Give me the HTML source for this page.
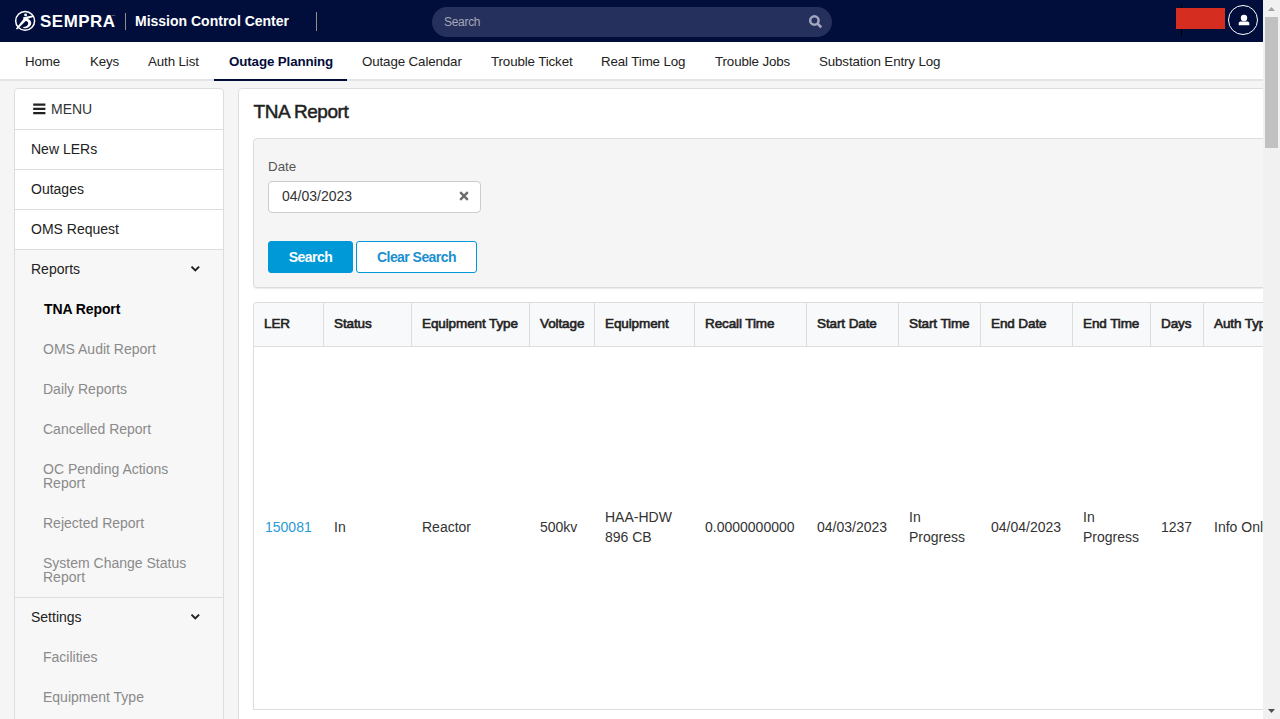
<!DOCTYPE html>
<html lang="en">
<head>
<meta charset="utf-8">
<title>TNA Report - Mission Control Center</title>
<style>
*{box-sizing:border-box;margin:0;padding:0}
html,body{width:1280px;height:719px;overflow:hidden}
body{font-family:"Liberation Sans",Arial,sans-serif;background:#f5f5f5;color:#222;position:relative}
.abs{position:absolute}
/* header */
#hdr{position:absolute;left:0;top:0;width:1263px;height:42px;background:#010e3c}
#brand{position:absolute;left:40px;top:11px;font-size:15px;font-weight:bold;color:#fff;letter-spacing:.45px;line-height:20px;transform:translateY(1px) scale(1.13,1.06);transform-origin:0 15px}
#tm{position:absolute;left:111.5px;top:13.5px;font-size:2.5px;color:#fff;line-height:3px;opacity:.7}
.vdiv{position:absolute;width:1px;background:#968f80}
#appname{position:absolute;left:135px;top:11px;font-size:14px;font-weight:bold;color:#fff;line-height:20px;white-space:nowrap}
#sbox{position:absolute;left:432px;top:7px;width:400px;height:30px;border-radius:15px;background:#26305c}
#sbox span{position:absolute;left:12px;top:7px;letter-spacing:-.3px;font-size:12px;line-height:16px;color:#a4a8ba}
#redact{position:absolute;left:1176px;top:8px;width:49px;height:21px;background:#d52d1f}
#blk{position:absolute;left:1181px;top:5px;width:1px;height:32px;background:#000}
#user{position:absolute;left:1228px;top:5px;width:30px;height:30px;border-radius:50%;border:1.5px solid #fff}
/* nav */
#nav{position:absolute;left:0;top:42px;width:1263px;height:39px;background:#fff;border-bottom:2px solid #e4e4e4}
#nav a{position:absolute;top:1px;height:38px;line-height:38px;font-size:13.33px;letter-spacing:-.12px;color:#222;white-space:nowrap;text-decoration:none}
#nav a.act{font-weight:bold;color:#020c3b}
#navline{position:absolute;left:214px;top:37px;width:133px;height:2px;background:#020c3b}
/* sidebar */
#side{position:absolute;left:14px;top:88px;width:210px;height:640px;background:#fff;border:1px solid #ddd;border-radius:4px;overflow:hidden}
#side .row{position:relative;height:40px;border-bottom:1px solid #ddd;font-size:14px;line-height:39px;padding-left:16px;color:#222}
#side .grp{background:#f7f7f7;border-bottom:1px solid #ddd}
#side .gh{position:relative;height:39px;line-height:39px;font-size:14px;padding-left:16px;color:#222}
#side .sub{padding:13px 30px 13px 28px;font-size:14px;line-height:14px;color:#8a8a8a}
#side .sub.cur{color:#000;font-weight:bold;padding-left:29px;letter-spacing:-.1px}
.chev{position:absolute;left:176px;top:15px}
/* main */
#main{position:absolute;left:238px;top:88px;width:1040px;height:640px;background:#fff;border:1px solid #ddd;border-radius:4px 0 0 0}
#title{position:absolute;left:14.5px;top:11px;font-size:19px;font-weight:normal;-webkit-text-stroke:.5px #222;line-height:24px;color:#222;letter-spacing:-.45px}
#panel{position:absolute;left:14px;top:49px;width:1030px;height:150px;background:#f5f5f5;border:1px solid #ddd;border-radius:4px;box-shadow:0 1px 1px rgba(0,0,0,.08)}
#lbl{position:absolute;left:14px;top:20px;font-size:13.33px;line-height:16px;color:#555}
#inp{position:absolute;left:14px;top:42px;width:213px;height:32px;background:#fff;border:1px solid #ccc;border-radius:4px}
#inp span{position:absolute;left:13px;top:6px;font-size:14px;line-height:16px;color:#333}
.btn{position:absolute;top:102px;height:32px;border-radius:3px;font-size:14px;letter-spacing:-.55px;font-weight:bold;line-height:30px;text-align:center;border:1px solid #0099d8}
#b1{left:14px;width:85px;background:#0099d8;color:#fff}
#b2{left:102px;width:121px;background:#fff;color:#1a8fcf}
/* table */
#tbl{position:absolute;left:14px;top:213px;border-collapse:separate;border-spacing:0;table-layout:fixed;width:1071px;border-top:1px solid #ddd;border-left:1px solid #ddd;border-radius:4px 0 0 0}
#tbl th{height:44px;background:#f8f9fa;border-right:1px solid #ddd;border-bottom:1px solid #ddd;font-size:13.5px;font-weight:normal;-webkit-text-stroke:.6px #222;text-align:left;padding:0 0 3px 10px;color:#222;white-space:nowrap;letter-spacing:-.1px}
#tbl th:first-child{border-radius:3px 0 0 0}
#tbl td{height:363px;border-bottom:1px solid #ddd;font-size:14px;line-height:20px;padding:0 0 2px 10px;color:#333;vertical-align:middle}
#tbl td a{color:#2b9ad6;text-decoration:none;padding-left:1px}
/* scrollbar */
#sb{position:absolute;left:1263px;top:0;width:17px;height:719px;background:#f1f1f1}
#thumb{position:absolute;left:2px;top:17px;width:13px;height:131px;background:#c1c1c1}
</style>
</head>
<body>
<div id="hdr">
  <svg class="abs" style="left:10px;top:5px" width="40" height="32" viewBox="0 0 40 32">
    <circle cx="15.13" cy="15.9" r="9.45" fill="none" stroke="#fff" stroke-width="1.5"/>
    <circle cx="15.6" cy="9.9" r="1.45" fill="#fff"/>
    <path d="M13.3 12.2 L23.6 10.3 L23.1 11.9 L17.8 13.8 C20.5 14.8 21.6 17 21.2 18.8 C20.6 21.5 17.5 23.6 14.2 23.3 L12.5 22.5 L14.7 21.8 C16.5 21.5 18 20.3 18.2 18.5 C18.4 17 17.2 16.2 15.6 16 L7.1 24.6 L5.9 23.8 L13.3 14.2 Z" fill="#fff"/>
  </svg>
  <div id="brand">SEMPRA</div>
  <div id="tm">TM</div>
  <div class="vdiv" style="left:125px;top:13px;height:17px"></div>
  <div id="appname">Mission Control Center</div>
  <div class="vdiv" style="left:316px;top:12px;height:19px"></div>
  <div id="sbox"><span>Search</span>
    <svg class="abs" style="left:376px;top:8px" width="14" height="14" viewBox="0 0 14 14"><circle cx="6.4" cy="5.5" r="4.2" fill="none" stroke="#a3a6be" stroke-width="2.5"/><path d="M9.6 8.8 L13.2 12.3" stroke="#a3a6be" stroke-width="2.6"/></svg>
  </div>
  <div id="blk"></div><div id="redact"></div>
  <div id="user">
    <svg class="abs" style="left:8.5px;top:8px" width="12" height="13" viewBox="0 0 12 13"><circle cx="6" cy="4" r="3.2" fill="#fff"/><path d="M0.7 11.2 V9.4 C0.7 8 1.8 7.4 3 7.4 H9 C10.2 7.4 11.3 8 11.3 9.4 V11.2 Z" fill="#fff"/></svg>
  </div>
</div>
<div id="nav">
  <a style="left:25px">Home</a>
  <a style="left:90px">Keys</a>
  <a style="left:148px">Auth List</a>
  <a class="act" style="left:229px">Outage Planning</a>
  <a style="left:362px">Outage Calendar</a>
  <a style="left:491px">Trouble Ticket</a>
  <a style="left:601px">Real Time Log</a>
  <a style="left:715px">Trouble Jobs</a>
  <a style="left:819px">Substation Entry Log</a>
  <div id="navline"></div>
</div>

<div id="side">
  <div class="row" style="padding-left:36px;font-size:14px;height:41px;line-height:40px;color:#333">
    <svg class="abs" style="left:18px;top:14px" width="13" height="12" viewBox="0 0 13 12"><path d="M0.2 1.65H12.4M0.2 5.9H12.4M0.2 10.1H12.4" stroke="#222" stroke-width="2.2"/></svg>MENU</div>
  <div class="row">New LERs</div>
  <div class="row">Outages</div>
  <div class="row">OMS Request</div>
  <div class="grp">
    <div class="gh">Reports<svg class="chev" width="10" height="8" viewBox="0 0 10 8"><path d="M0.5 1.6 L4.3 5.4 L8.1 1.6" fill="none" stroke="#222" stroke-width="2"/></svg></div>
    <div class="sub cur">TNA Report</div>
    <div class="sub">OMS Audit Report</div>
    <div class="sub">Daily Reports</div>
    <div class="sub">Cancelled Report</div>
    <div class="sub">OC Pending Actions Report</div>
    <div class="sub">Rejected Report</div>
    <div class="sub">System Change Status Report</div>
  </div>
  <div class="grp">
    <div class="gh">Settings<svg class="chev" width="10" height="8" viewBox="0 0 10 8"><path d="M0.5 1.6 L4.3 5.4 L8.1 1.6" fill="none" stroke="#222" stroke-width="2"/></svg></div>
    <div class="sub">Facilities</div>
    <div class="sub">Equipment Type</div>
    <div class="sub">Voltage</div>
  </div>
</div>

<div id="main">
  <div id="title">TNA Report</div>
  <div id="panel">
    <div id="lbl">Date</div>
    <div id="inp"><span>04/03/2023</span>
      <svg class="abs" style="left:189.5px;top:8.5px" width="10" height="10" viewBox="0 0 10 10"><path d="M1.2 1.2 L8.8 8.8 M8.8 1.2 L1.2 8.8" stroke="#6e6e6e" stroke-width="2.4"/></svg>
    </div>
    <div class="btn" id="b1">Search</div>
    <div class="btn" id="b2">Clear Search</div>
  </div>
  <table id="tbl">
    <colgroup><col style="width:70px"><col style="width:88px"><col style="width:118px"><col style="width:65px"><col style="width:100px"><col style="width:112px"><col style="width:92px"><col style="width:82px"><col style="width:92px"><col style="width:78px"><col style="width:53px"><col style="width:120px"></colgroup>
    <tr><th>LER</th><th>Status</th><th>Equipment Type</th><th>Voltage</th><th>Equipment</th><th>Recall Time</th><th>Start Date</th><th>Start Time</th><th>End Date</th><th>End Time</th><th>Days</th><th>Auth Type</th></tr>
    <tr><td><a>150081</a></td><td>In</td><td>Reactor</td><td>500kv</td><td>HAA-HDW<br>896 CB</td><td>0.0000000000</td><td>04/03/2023</td><td>In<br>Progress</td><td>04/04/2023</td><td>In<br>Progress</td><td>1237</td><td style="white-space:nowrap">Info Only</td></tr>
  </table>
</div>

<div id="sb">
  <svg class="abs" style="left:5px;top:7px" width="7" height="4" viewBox="0 0 7 4"><path d="M0 4 L3.5 0 L7 4 Z" fill="#a3a3a3"/></svg>
  <div id="thumb"></div>
  <svg class="abs" style="left:5px;top:709px" width="7" height="4" viewBox="0 0 7 4"><path d="M0 0 L3.5 4 L7 0 Z" fill="#505050"/></svg>
</div>
</body>
</html>
